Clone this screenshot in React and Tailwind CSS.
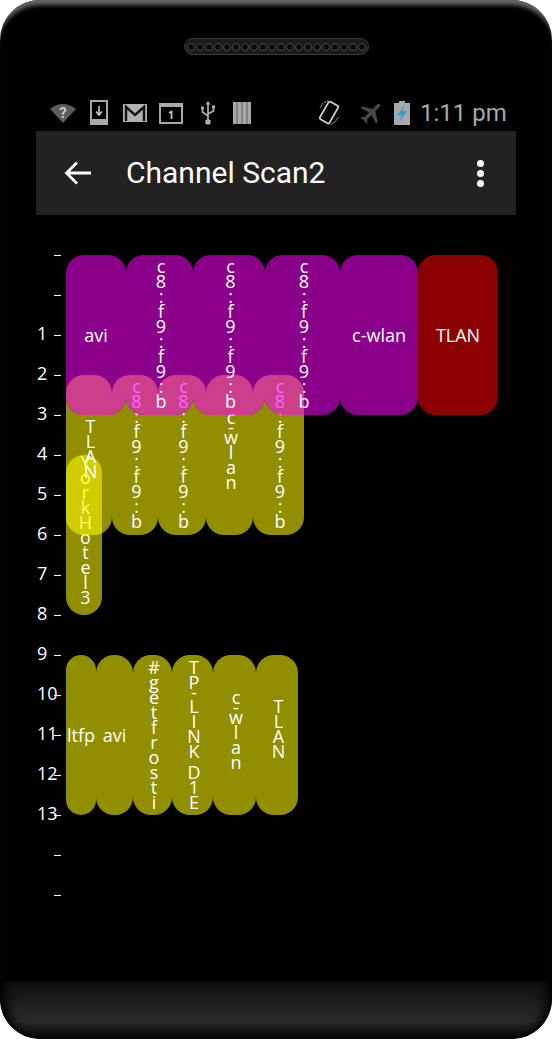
const C8 = { text: 'c8:f9:f9:b', up: 1.5 };
const WLAN = { text: 'c-wlan', up: 5 };
const TLAN = { text: 'TLAN', up: 6 };

const HOTEL = { x: 66, y: 455, w: 36, h: 160, text: 'YorkHotel3', up: 5, vertical: true };

const ROW_TWO = [
  { x: 66, w: 46, ...TLAN },
  { x: 112, w: 46, ...C8 },
  { x: 158, w: 48, ...C8 },
  { x: 206, w: 47, ...WLAN },
  { x: 253, w: 51, ...C8 },
].map((b) => ({ ...b, y: 375, h: 160, vertical: true }));

const ROW_ONE = [
  { x: 66, w: 60, text: 'avi' },
  { x: 126, w: 67, ...C8, vertical: true },
  { x: 193, w: 72, ...C8, vertical: true },
  { x: 265, w: 75, ...C8, vertical: true },
  { x: 340, w: 78, text: 'c-wlan' },
].map((b) => ({ ...b, y: 255, h: 160 }));

const RED = { x: 418, y: 255, w: 80, h: 160, text: 'TLAN' };

const ROW_THREE = [
  { x: 66, w: 30, text: 'ltfp' },
  { x: 96, w: 37, text: 'avi' },
  { x: 133, w: 39, text: '#getfrosti', vertical: true },
  { x: 172, w: 41, text: 'TP-LINKD1E', extra: { 2: 4, 6: 6 }, vertical: true },
  { x: 213, w: 43, ...WLAN, vertical: true },
  { x: 256, w: 42, ...TLAN, vertical: true },
].map((b) => ({ ...b, y: 655, h: 160 }));

// -1 and 0 sit above the "1" tick, 14 and 15 below the "13" tick; those have no number
const TICKS = Array.from({ length: 17 }, (_, i) => i - 1);

// text of a block, one letter per line when the block is too narrow
function Label({ block }) {
  if (!block.vertical) {
    return <span className="whitespace-nowrap">{block.text}</span>;
  }
  const extra = block.extra || {};
  return (
    <span
      className="ml-[3px] flex flex-col items-center"
      style={{ marginBottom: (block.up || 0) * 2 }}
    >
      {block.text.split('').map((ch, i) =>
        // the hyphen takes hardly any room in the reference
        ch === '-' ? (
          <span key={i} className="block leading-[5px]" style={{ height: 5 + (extra[i] || 0) }}>
            {ch}
          </span>
        ) : (
          <span key={i} className="block leading-[15px]" style={{ height: 15 + (extra[i] || 0) }}>
            {ch}
          </span>
        )
      )}
    </span>
  );
}

// a rounded bar; where a bar below it shows through, that part is tinted
function Block({ block, bg, overlaps = [], tint, tintText }) {
  const shown = overlaps.filter((o) => o.x < block.x + block.w && o.x + o.w > block.x);
  return (
    <div
      className="absolute overflow-hidden rounded-[18px] text-white"
      style={{ left: block.x, top: block.y - 215, width: block.w, height: block.h, backgroundColor: bg }}
    >
      {shown.map((o, i) => (
        <div
          key={i}
          className="absolute flex items-center justify-center rounded-[18px]"
          style={{
            left: o.x - block.x,
            top: o.y - block.y,
            width: o.w,
            height: o.h,
            backgroundColor: tint,
            color: tintText,
          }}
        >
          <Label block={o} />
        </div>
      ))}
      <div className="absolute inset-0 flex items-center justify-center">
        <Label block={block} />
      </div>
    </div>
  );
}

function Speaker() {
  return (
    <div className="mt-[38px] flex h-[17px] w-[185px] items-center justify-center gap-px self-center rounded-full border border-[#3a3a3a] bg-[#1c1c1c]">
      {Array.from({ length: 20 }, (_, i) => (
        <span key={i} className="h-2 w-2 rounded-full border border-[#4a4a4a] bg-[#0b0b0b]" />
      ))}
    </div>
  );
}

function StatusBar() {
  return (
    <div className="mt-[44px] flex h-[27px] items-center pl-[50px] text-[#a8a8a8]">
      <svg width="26" height="20" viewBox="0 0 26 20">
        <path d="M0 6 Q13 -4 26 6 L13 20 Z" fill="#5c5c5c" />
        <text x="13" y="15" textAnchor="middle" fontSize="15" fontWeight="700" fontFamily="Roboto" fill="#c8c8c8">?</text>
      </svg>
      <svg className="ml-[14px]" width="18" height="25" viewBox="0 0 18 25">
        <rect x="1" y="1" width="16" height="23" fill="none" stroke="#a8a8a8" strokeWidth="2" />
        <rect x="1" y="19" width="16" height="5" fill="#a8a8a8" />
        <path d="M9 6v8M6 11.5l3 3.5 3-3.5" fill="none" stroke="#c8c8c8" strokeWidth="1.6" />
      </svg>
      <svg className="ml-[15px]" width="24" height="18" viewBox="0 0 24 18">
        <rect width="24" height="18" fill="#b0b0b0" />
        <path d="M3 17V3l9 8 9-8v14" fill="none" stroke="#111" strokeWidth="2.4" />
      </svg>
      <svg className="ml-[12px]" width="24" height="22" viewBox="0 0 24 22">
        <rect x="1" y="2" width="22" height="19" fill="none" stroke="#a8a8a8" strokeWidth="2" />
        <rect x="1" y="1" width="22" height="4" fill="#a8a8a8" />
        <path d="M10 11l2.5-1.5V17" fill="none" stroke="#c0c0c0" strokeWidth="1.8" />
      </svg>
      <svg className="ml-[16px]" width="18" height="24" viewBox="0 0 18 24">
        <path d="M9 2v18M3.5 8v3l5.5 4M14.5 7v3L9 13" fill="none" stroke="#b0b0b0" strokeWidth="1.7" />
        <path d="M9 0l2.5 3.5h-5z" fill="#b0b0b0" />
        <circle cx="9" cy="21" r="2.8" fill="#b0b0b0" />
        <circle cx="3.5" cy="7" r="1.7" fill="#b0b0b0" />
        <rect x="13" y="4.5" width="3" height="3" fill="#b0b0b0" />
      </svg>
      <svg className="ml-[16px]" width="18" height="22" viewBox="0 0 18 22">
        <rect width="18" height="22" fill="#a8a8a8" />
        <path d="M4 0v22M9 0v22M14 0v22" stroke="#5e5e5e" strokeWidth="1" />
      </svg>
      <svg className="ml-[67px]" width="22" height="25" viewBox="0 0 22 25">
        <rect x="5.5" y="2.5" width="11" height="20" rx="1.5" transform="rotate(30 11 12.5)" fill="none" stroke="#d0d0d0" strokeWidth="1.8" />
        <path d="M6 3 L10 0.5M2 8 L5 3M17 22 L12 24.5M20.5 17 L17 22" fill="none" stroke="#888" strokeWidth="1" />
      </svg>
      <svg className="ml-[18px]" width="28" height="28" viewBox="0 0 24 24">
        <path
          d="M21 16v-2l-8-5V3.5c0-.83-.67-1.5-1.5-1.5S10 2.67 10 3.5V9l-8 5v2l8-2.5V19l-2 1.5V22l3.5-1 3.5 1v-1.5L13 19v-5.5l8 2.5z"
          transform="rotate(45 12 12)"
          fill="#474747"
        />
      </svg>
      <svg className="ml-[8px]" width="16" height="24" viewBox="0 0 16 24">
        <path d="M5 0h6v2h5v22H0V2h5z" fill="#a8a8a8" />
        <path d="M10.5 4L3.5 14h4l-2 7 7.5-11H8.5z" fill="#2f9fd0" />
      </svg>
      <span className="ml-[10px] font-['Roboto',sans-serif] text-[24px] leading-none text-[#a8a8a8]">1:11 pm</span>
    </div>
  );
}

function AppBar() {
  return (
    <div className="mx-9 mt-[5px] flex h-[84px] items-center bg-[#222222] text-white">
      <svg className="ml-[28px]" width="28" height="26" viewBox="0 0 28 26">
        <path d="M27 13H3M13 2.5L2.5 13 13 23.5" fill="none" stroke="#fff" strokeWidth="2.8" />
      </svg>
      <span className="ml-[34px] font-['Roboto',sans-serif] text-[30px] leading-none">Channel Scan2</span>
      <div className="ml-auto mr-8 flex flex-col gap-[3px]">
        <span className="h-[7px] w-[7px] rounded-full bg-white" />
        <span className="h-[7px] w-[7px] rounded-full bg-white" />
        <span className="h-[7px] w-[7px] rounded-full bg-white" />
      </div>
    </div>
  );
}

function Chart() {
  return (
    <div className="relative flex-1 font-['Open_Sans',sans-serif] text-[18px] leading-none text-white">
      {TICKS.map((n) => (
        <div key={n} className="absolute left-[37px] flex h-5 w-[25px] items-center" style={{ top: 255 + (n + 1) * 40 - 215 - 10 }}>
          {n > 0 && n < 14 && <span className="-mt-[4px] text-[18px] leading-none">{n}</span>}
          <span className="absolute left-[17px] h-px w-[7px] bg-white" />
        </div>
      ))}

      <Block block={HOTEL} bg="#918e00" />
      {ROW_TWO.map((b, i) => (
        <Block
          key={i}
          block={b}
          bg="#918e00"
          overlaps={i === 0 ? [HOTEL] : []}
          tint="#cfcc00"
          tintText="#ffff66"
        />
      ))}
      {ROW_ONE.map((b, i) => (
        <Block key={i} block={b} bg="#8b008b" overlaps={ROW_TWO} tint="#cd3f8d" tintText="#ff66ff" />
      ))}
      <Block block={RED} bg="#8b0000" />
      {ROW_THREE.map((b, i) => (
        <Block key={i} block={b} bg="#918e00" />
      ))}
    </div>
  );
}

export default function App() {
  return (
    <div className="h-[1039px] w-[552px] bg-white">
      <div className="flex h-full flex-col overflow-hidden rounded-[40px] bg-black shadow-[inset_0_8px_4px_-3px_#666666]">
        <Speaker />
        <StatusBar />
        <AppBar />
        <Chart />
        <div className="h-[58px] rounded-b-[40px] bg-gradient-to-b from-[#101010] via-[#2a2a2a] via-70% to-[#050505] shadow-[inset_14px_0_12px_-8px_#000,inset_-14px_0_12px_-8px_#000]" />
      </div>
    </div>
  );
}
